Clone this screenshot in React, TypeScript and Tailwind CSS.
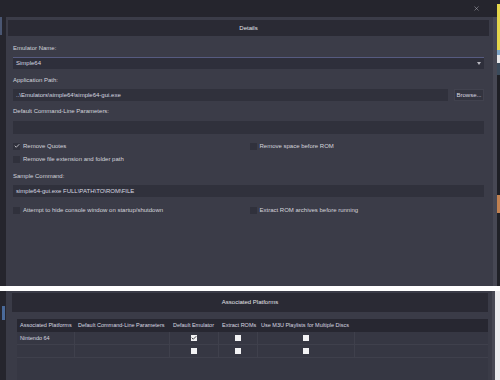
import { Check, X } from "lucide-react";

type Col = { title: string; w: string };

const cols: Col[] = [
  { title: "Associated Platforms", w: "w-[58px]" },
  { title: "Default Command-Line Parameters", w: "w-[95px]" },
  { title: "Default Emulator", w: "w-[49px]" },
  { title: "Extract ROMs", w: "w-[39px]" },
  { title: "Use M3U Playlists for Multiple Discs", w: "w-[97px]" },
];

const rows = [
  { name: "Nintendo 64", checks: [true, false, false] },
  { name: "", checks: [false, false, false] },
];

function Box({ checked }: { checked?: boolean }) {
  return (
    <div className="w-[7px] h-[7px] bg-[#30313c] flex items-center justify-center">
      {checked && <Check size={6} strokeWidth={3} className="text-[#e4e4ea]" />}
    </div>
  );
}

function CheckRow({ label, checked }: { label: string; checked?: boolean }) {
  return (
    <div className="flex items-center gap-[3px] h-[8px]">
      <Box checked={checked} />
      <span className="text-[#d4d4dc]">{label}</span>
    </div>
  );
}

function Label({ text, className }: { text: string; className?: string }) {
  return <div className={"h-[8px] leading-[8px] text-[#d4d4dc] " + (className ?? "")}>{text}</div>;
}

function Field({ value, className }: { value: string; className?: string }) {
  return (
    <div className={"bg-[#30313c] flex items-center pl-[3px] text-[#d8d8e0] " + (className ?? "")}>
      {value}
    </div>
  );
}

function TableCheck({ checked }: { checked: boolean }) {
  return (
    <div className="w-[6px] h-[6px] bg-[#f2f2f4] flex items-center justify-center">
      {checked && <Check size={6} strokeWidth={3.5} className="text-[#2a2a30]" />}
    </div>
  );
}

export default function App() {
  return (
    <div className="w-[500px] h-[380px] overflow-hidden bg-white font-['Liberation_Sans',Arial,sans-serif] text-[6px]">
      {/* top window */}
      <div className="h-[286px] flex bg-[#25252d]">
        <div className="flex-1 flex flex-col">
          <div className="h-[17px] flex items-center justify-end pr-[17px]">
            <X size={7} strokeWidth={1.5} className="text-[#c4c4cc]" />
          </div>
          <div className="flex flex-1">
            <div className="w-[6px] flex flex-col">
              <div className="w-[2px] h-[18px] bg-[#4a5672]" />
            </div>
            <div className="flex-1 bg-[#3b3c48] pt-[3px] pl-[2px] pr-[4px]">
              <div className="h-[16px] bg-[#2a2a34] flex items-center justify-center text-[#e2e2e8]">
                Details
              </div>
              <div className="px-[5px]">
                <Label text="Emulator Name:" className="mt-[8px]" />
                <div className="mt-[5px] h-[12px] bg-[#2e2f3b] border-t border-[#565b80] flex items-center justify-between pl-[3px] pr-[3px] text-[#d8d8e0]">
                  <span>Simple64</span>
                  <svg width="4" height="3" viewBox="0 0 4 3">
                    <path d="M0 0 L4 0 L2 3 Z" fill="#b8b8c0" />
                  </svg>
                </div>
                <Label text="Application Path:" className="mt-[7px]" />
                <div className="mt-[5px] flex gap-[6px] h-[12px]">
                  <Field value="..\Emulators\simple64\simple64-gui.exe" className="flex-1" />
                  <div className="w-[30px] bg-[#33343f] border border-[#41424e] flex items-center justify-center text-[#d8d8e0]">
                    Browse...
                  </div>
                </div>
                <Label text="Default Command-Line Parameters:" className="mt-[6px]" />
                <Field value="" className="mt-[6px] h-[13px]" />
                <div className="mt-[8px] grid grid-cols-2">
                  <CheckRow label="Remove Quotes" checked />
                  <div className="pl-[1px]">
                    <CheckRow label="Remove space before ROM" />
                  </div>
                </div>
                <div className="mt-[5px]">
                  <CheckRow label="Remove file extension and folder path" />
                </div>
                <Label text="Sample Command:" className="mt-[9px]" />
                <Field value="simple64-gui.exe FULL\PATH\TO\ROM\FILE" className="mt-[5px] h-[12px]" />
                <div className="mt-[9px] grid grid-cols-2">
                  <CheckRow label="Attempt to hide console window on startup/shutdown" />
                  <div className="pl-[1px]">
                    <CheckRow label="Extract ROM archives before running" />
                  </div>
                </div>
              </div>
            </div>
            <div className="w-[4px] bg-[#474854]" />
          </div>
        </div>
        <div className="w-[3px] flex flex-col">
          <div className="h-[4px] bg-[#25252d]" />
          <div className="h-[46px] bg-[#e6d84c]" />
          <div className="h-[5px] bg-[#7fa6c8]" />
          <div className="h-[8px] bg-[#e8e8ea]" />
          <div className="h-[12px] bg-[#3a4a5a]" />
          <div className="h-[120px] bg-[#1e1f25]" />
          <div className="h-[18px] bg-[#c08050]" />
          <div className="flex-1 bg-[#202127]" />
        </div>
      </div>

      <div className="h-[5px] bg-white" />

      {/* bottom window */}
      <div className="h-[89px] flex">
        <div className="w-[6px] bg-[#25252d] flex flex-col">
          <div className="h-[15px]" />
          <div className="ml-[2px] w-[3px] h-[14px] bg-[#4a6a9a]" />
        </div>
        <div className="flex-1 bg-[#3a3b47] pt-[2px] pl-[6px] pr-[4px]">
          <div className="h-[19px] bg-[#2a2a34] flex items-center justify-center text-[#e2e2e8]">
            Associated Platforms
          </div>
          <div className="mt-[7px] ml-[5px] bg-[#363743] h-[70px] text-[5.5px]">
            <div className="flex h-[13px] bg-[#272731] text-[#d8d8e0]">
              {cols.map((c) => (
                <div key={c.title} className={c.w + " pl-[3px] flex items-center whitespace-nowrap"}>
                  {c.title}
                </div>
              ))}
              <div className="flex-1" />
            </div>
            {rows.map((r, i) => (
              <div key={i} className="flex h-[13px] border-b border-[#3f404c] text-[#d8d8e0]">
                <div className="w-[58px] pl-[3px] flex items-center border-r border-[#3f404c]">{r.name}</div>
                <div className="w-[95px] border-r border-[#3f404c]" />
                <div className="w-[49px] flex items-center justify-center border-r border-[#3f404c]">
                  <TableCheck checked={r.checks[0]} />
                </div>
                <div className="w-[39px] flex items-center justify-center border-r border-[#3f404c]">
                  <TableCheck checked={r.checks[1]} />
                </div>
                <div className="w-[97px] flex items-center justify-center border-r border-[#3f404c]">
                  <TableCheck checked={r.checks[2]} />
                </div>
                <div className="flex-1" />
              </div>
            ))}
          </div>
        </div>
        <div className="w-[3px] bg-[#474854]" />
        <div className="w-[5px] bg-[#ececef]" />
      </div>
    </div>
  );
}
